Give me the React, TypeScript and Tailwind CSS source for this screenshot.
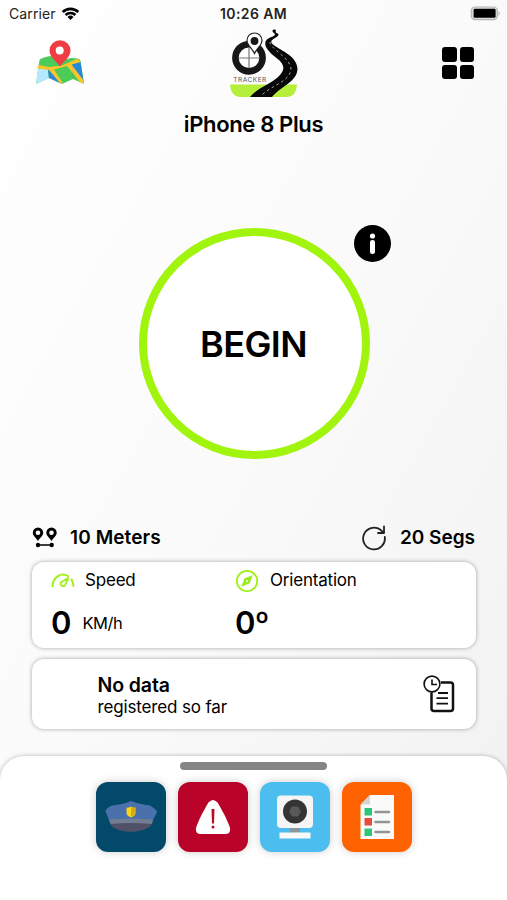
import type { ReactNode } from "react";

function WifiIcon() {
  return (
    <svg width="19" height="14" viewBox="0 0 19 14" className="ml-[5px]">
      <path d="M0.8 4.1a12.3 12.3 0 0 1 17.400 0l-1.800 1.900a9.800 9.800 0 0 0-13.800 0z" />
      <path d="M3.700 7.100a8.200 8.200 0 0 1 11.600 0l-1.800 1.800a5.700 5.700 0 0 0-8 0z" />
      <path d="M6.500 10a4.300 4.300 0 0 1 6 0l-3 3z" />
    </svg>
  );
}

function BatteryIcon() {
  return (
    <svg width="32" height="16" viewBox="0 0 32 16">
      <rect x="1.300" y="1" width="26" height="12.600" rx="3.600" fill="#ddd" stroke="#b5b5b5" strokeWidth="1.200" />
      <rect x="3.600" y="2.800" width="22" height="9" rx="1.300" />
      <path d="M28.600 5.100q2.400 2.300 0 4.800z" fill="#aaa" />
    </svg>
  );
}

function MapIcon() {
  return (
    <svg width="50" height="46" viewBox="0 0 50 46">
      <path d="M4.500 20Q5.500 18 15 16L28 20L36 18L43 18.500Q45 18.500 45.500 21L49 44L38 39L27 44L14 38L1 44z" fill="#4ccb58" />
      <path d="M3 28.500L13 29.500L14 38L1 44z" fill="#b5e9ff" />
      <path d="M13 29L18 30L26 43.500L14 38z" fill="#2f86d8" />
      <path d="M35 25L45.500 22L48.500 41L46 40z" fill="#2888d8" />
      <path d="M3.500 25L14 27L27 25.500L43 18.500L45.500 22L36.500 24.500L49 41V44L45 42L32 26L19 29.500L28 43.500L25 43L14 30L2.500 28.500z" fill="#fdc52c" />
      <path d="M14 30V38M38 27v12" stroke="#158751" strokeWidth=".8" opacity=".2" />
      <path d="M25 26.500C22 22 14.500 17.500 14.500 10.500a10.500 10.300 0 0 1 21 0C35.500 17.500 28 22 25 26.500z" fill="#ef3e43" />
      <circle cx="24.700" cy="10.500" r="4" fill="#fff" />
    </svg>
  );
}

function TrackerLogo() {
  return (
    <svg width="70" height="70" viewBox="0 0 70 70">
      <path d="M1 56.500H68Q67 69 57 69H12Q2 69 1 56.500z" fill="#b5ee3b" />
      <path
        d="M44.500 1.500Q48 1 46.500 4Q47 5 49.500 6Q50 8 46 10C41 12.500 41 15 46 18C55 24 68 29 68.500 41C68 54 52 58 43 69H21C29 59 43 56 51 47C58 39 53 34 45 28C38 22 34 16 37.500 12C40 9 48 8.500 45.500 5.500Q42 3 44.500 1.500z"
        fill="#080808"
      />
      <path d="M41 14C41 21 61 29 62 41C61 54 42 57 32 68" fill="none" stroke="#bbb" strokeWidth=".9" strokeDasharray="2.500 3" />
      <circle cx="20" cy="29.800" r="13.600" fill="#fff" stroke="#171717" strokeWidth="6.600" />
      <path d="M10 30H30M20 20V40" stroke="#777" strokeWidth="1.200" />
      <path d="M25.500 25.500C23 20 18 17 18 12.500a7.500 7.500 0 0 1 15 0C33 17 28 20 25.500 25.500z" fill="#fff" stroke="#222" strokeWidth="1.200" />
      <circle cx="25.500" cy="13" r="3.900" fill="#171717" />
      <text x="4.300" y="53.500" fontSize="6.500" fontFamily="Inter, sans-serif" fill="#555" textLength="33">TRACKER</text>
    </svg>
  );
}

function GridIcon() {
  return (
    <div className="grid grid-cols-2 gap-[3px]">
      <span className="size-[14.500px] rounded-[3px] bg-black" />
      <span className="size-[14.500px] rounded-[3px] bg-black" />
      <span className="size-[14.500px] rounded-[3px] bg-black" />
      <span className="size-[14.500px] rounded-[3px] bg-black" />
    </div>
  );
}

function InfoIcon() {
  return (
    <svg width="37" height="37" viewBox="0 0 37 37">
      <circle cx="18.500" cy="18.500" r="18.500" />
      <circle cx="18.500" cy="11" r="2.600" fill="#fff" />
      <rect x="16" y="15" width="5" height="14" rx="2.300" fill="#fff" />
    </svg>
  );
}

function DistanceIcon() {
  return (
    <svg width="26" height="22" viewBox="0 0 26 22">
      <path
        fillRule="evenodd"
        d="M6 14C4.500 11 .8 9 .8 5.700a5.200 5.200 0 0 1 10.400 0C11.200 9 7.500 11 6 14zM6 3.500a2.300 2.300 0 1 0 0 4.600a2.300 2.300 0 0 0 0-4.600zM19.500 14C18 11 14.300 9 14.300 5.700a5.200 5.200 0 0 1 10.400 0C24.700 9 21 11 19.500 14zM19.500 3.500a2.300 2.300 0 1 0 0 4.600a2.300 2.300 0 0 0 0-4.600z"
      />
      <path d="M6 18H20" stroke="#000" strokeWidth="1.500" />
      <circle cx="6" cy="18" r="2.200" />
      <circle cx="19.700" cy="18" r="2.200" />
    </svg>
  );
}

function RefreshIcon() {
  return (
    <svg width="26" height="26" viewBox="0 0 26 26" fill="none" stroke="#222" strokeWidth="1.800" strokeLinecap="round" strokeLinejoin="round">
      <path d="M23.800 12A10.900 10.900 0 1 1 19.500 4.800L22.500 7.500" />
      <path d="M23 1.500V8H17" />
    </svg>
  );
}

function GaugeIcon() {
  return (
    <svg width="24" height="15" viewBox="0 0 24 15" fill="none" stroke="#a0f116" strokeWidth="2" strokeLinecap="round">
      <path d="M1.500 13.300C2 4 10 -1 17 3M20.600 6.500Q22.200 9.500 22.400 13" />
      <path d="M17.300 5L10 9.300a2.500 2.500 0 1 0 4.300 2.600z" strokeWidth="1.900" strokeLinejoin="round" />
    </svg>
  );
}

function CompassIcon() {
  return (
    <svg width="24" height="24" viewBox="0 0 24 24">
      <circle cx="12" cy="12" r="10.200" fill="none" stroke="#a0f116" strokeWidth="1.800" />
      <path fillRule="evenodd" d="M17.600 6.300L14.700 14.200L6.400 17.700L9.400 9.600zM12 10.900a1.100 1.100 0 1 0 0 2.200a1.100 1.100 0 0 0 0-2.200z" fill="#96ec13" />
    </svg>
  );
}

function HistoryIcon() {
  return (
    <svg width="32" height="38" viewBox="0 0 32 38" fill="none" stroke="#111">
      <path d="M18 7.500H27.500Q30 7.500 30 10V33.500Q30 36 27.500 36H11Q8.500 36 8.500 33.500V17.500" strokeWidth="2.500" />
      <circle cx="9" cy="9" r="7.900" strokeWidth="1.600" fill="#fff" />
      <path d="M9 4.500V9.500H14" strokeWidth="1.600" />
      <path d="M15 18H25M13.500 23.200H25M13.500 28.600H25" strokeWidth="1.800" />
    </svg>
  );
}

function PoliceIcon() {
  return (
    <svg width="70" height="70" viewBox="0 0 70 70">
      <path d="M13.500 39L14.500 43C22 52 48 52 55.500 43L57 37z" fill="#505168" />
      <path d="M9.500 29.500Q10 26 16 23.500Q28 22 35 19Q43 22 54 23.500Q60 27 61 30L56.500 39Q35 36 13.500 39z" fill="#4b71ad" />
      <path d="M13 37.500Q35 36 57 37.500L56 42Q35 40 14.500 42z" fill="#737d91" />
      <path d="M30.500 25.500Q33 26 35 24.500Q37 26 39.500 25.500V31Q39.500 33.500 35 35.500Q30.500 33.500 30.500 31z" fill="#fad51b" />
      <path d="M35 25V35Q39 33 39 31V26z" fill="#d5aa13" />
    </svg>
  );
}

function WarningIcon() {
  return (
    <svg width="70" height="70" viewBox="0 0 70 70">
      <path d="M30.500 20.500Q35 15.500 39.500 20.500C43 26 49.500 38 52 46Q53 51.500 48 52H22Q17 51.500 18 46C20.500 38 27 26 30.500 20.500z" fill="#fff" />
      <path d="M33.500 27H36.500L36 41.500H34z" fill="#bb0929" />
      <circle cx="35" cy="45" r="1.500" fill="#bb0929" />
    </svg>
  );
}

function CameraIcon() {
  return (
    <svg width="70" height="70" viewBox="0 0 70 70">
      <rect x="17" y="13.500" width="36" height="32.500" rx="4" fill="#f5f5f5" />
      <path d="M30 46H40V51H30z" fill="#8a969c" />
      <path d="M19.500 50.500H50.500V56.500H19.500z" fill="#fafafa" />
      <circle cx="35" cy="29.500" r="12" fill="#343434" />
      <path d="M32 24.500H38L41 29.500L38 34.500H32L29 29.500z" fill="#595959" />
    </svg>
  );
}

function ChecklistIcon() {
  return (
    <svg width="70" height="70" viewBox="0 0 70 70">
      <path d="M28 13H52V57H18.500V23z" fill="#fafafa" />
      <path d="M28 13V22.500H18.500z" fill="#d2d5d8" />
      <path d="M22.500 26H30V33.500H22.500z" fill="#2ec47a" />
      <path d="M22.500 36H30V43.500H22.500z" fill="#e44d3c" />
      <path d="M22.500 46.500H30V54H22.500z" fill="#2ec47a" />
      <path d="M33.500 30H47M33.500 40H47M33.500 50H47" stroke="#929598" strokeWidth="2.600" strokeLinecap="round" />
    </svg>
  );
}

function Tile({ color, children }: { color: string; children: ReactNode }) {
  return (
    <button className={`size-[70px] overflow-hidden rounded-xl shadow-[0_0_9px_rgba(0,0,0,0.2)] ${color}`}>
      {children}
    </button>
  );
}

export default function App() {
  return (
    <main className="flex h-[900px] w-[507px] flex-col overflow-hidden bg-linear-to-br from-white via-[#fafafa] to-[#f1f1f1] font-['Inter',sans-serif] text-black">
      {/* Status bar */}
      <div className="grid h-7 shrink-0 grid-cols-3 items-center text-[14px] leading-none">
        <div className="flex items-center pl-[9px] text-[#222]">
          <span className="tracking-[0.1px]">Carrier</span>
          <WifiIcon />
        </div>
        <span className="text-center font-semibold tracking-[0.4px] text-[#222]">10:26 AM</span>
        <div className="flex justify-end pr-[5px]">
          <BatteryIcon />
        </div>
      </div>

      {/* Header */}
      <header className="grid h-[70px] shrink-0 grid-cols-3 items-center">
        <div className="pl-[35px]"><MapIcon /></div>
        <div className="flex justify-center pl-5"><TrackerLogo /></div>
        <div className="flex justify-end pr-[33px]"><GridIcon /></div>
      </header>
      <h1 className="mt-[11px] h-8 shrink-0 text-center text-[22px] leading-[31px] font-semibold tracking-[-0.35px]">iPhone 8 Plus</h1>

      {/* Start button */}
      <div className="relative mt-[87px] ml-[138.500px] size-[231px] shrink-0">
        <button className="size-full rounded-full border-8 border-[#a1f40d] bg-white pr-px text-[36px] font-semibold tracking-[-0.600px]">
          BEGIN
        </button>
        <div className="absolute top-[-3px] left-[215px]"><InfoIcon /></div>
      </div>

      {/* Sampling intervals */}
      <div className="mt-[65px] flex h-[27px] shrink-0 items-center justify-between pr-[32px] pl-8 text-[19px] font-semibold">
        <div className="flex items-center gap-3">
          <DistanceIcon />
          <span className="pt-px tracking-[0.1px]">10 Meters</span>
        </div>
        <div className="flex items-center gap-[13px]">
          <RefreshIcon />
          <span className="pt-px">20 Segs</span>
        </div>
      </div>

      {/* Readings */}
      <section className="mt-[11px] mr-[31px] ml-8 grid h-[86px] shrink-0 grid-cols-[184px_1fr] rounded-xl bg-white pl-[19px] shadow-[0_0_4px_rgba(0,0,0,0.35)]">
        <div>
          <div className="flex h-[37px] items-center gap-2.5 text-[17px]">
            <GaugeIcon />
            <span className="pt-px tracking-[-0.2px]">Speed</span>
          </div>
          <div className="flex h-[48px] items-center gap-[11px]">
            <span className="text-[31px] font-semibold">0</span>
            <span className="pt-px text-[16.500px] tracking-[-0.5px]">KM/h</span>
          </div>
        </div>
        <div>
          <div className="flex h-[37px] items-center gap-[11px] text-[17px]">
            <CompassIcon />
            <span className="pt-px tracking-[-0.2px]">Orientation</span>
          </div>
          <div className="flex h-[48px] items-center text-[31px] font-semibold tracking-[-0.8px]">0º</div>
        </div>
      </section>

      <section className="mt-[11px] mr-[31px] ml-8 flex h-[70px] shrink-0 items-center justify-between rounded-xl bg-white pr-[21px] pl-[65.500px] shadow-[0_0_4px_rgba(0,0,0,0.35)]">
        <div className="pt-[3px]">
          <p className="text-[19.500px] leading-[22px] font-semibold tracking-[-0.1px]">No data</p>
          <p className="text-[17px] leading-[22px] tracking-[-0.15px]">registered so far</p>
        </div>
        <HistoryIcon />
      </section>

      {/* Bottom sheet */}
      <footer className="mt-[27px] flex flex-1 flex-col items-center rounded-t-[24px] bg-white pt-1.5 shadow-[0_0_4px_rgba(0,0,0,0.28)]">
        <div className="h-2 w-[147px] rounded-full bg-[#858585]" />
        <div className="mt-3 flex gap-3">
          <Tile color="bg-[#034a6a]"><PoliceIcon /></Tile>
          <Tile color="bg-[#b90329]"><WarningIcon /></Tile>
          <Tile color="bg-[#4bbdef]"><CameraIcon /></Tile>
          <Tile color="bg-[#ff6200]"><ChecklistIcon /></Tile>
        </div>
      </footer>
    </main>
  );
}
